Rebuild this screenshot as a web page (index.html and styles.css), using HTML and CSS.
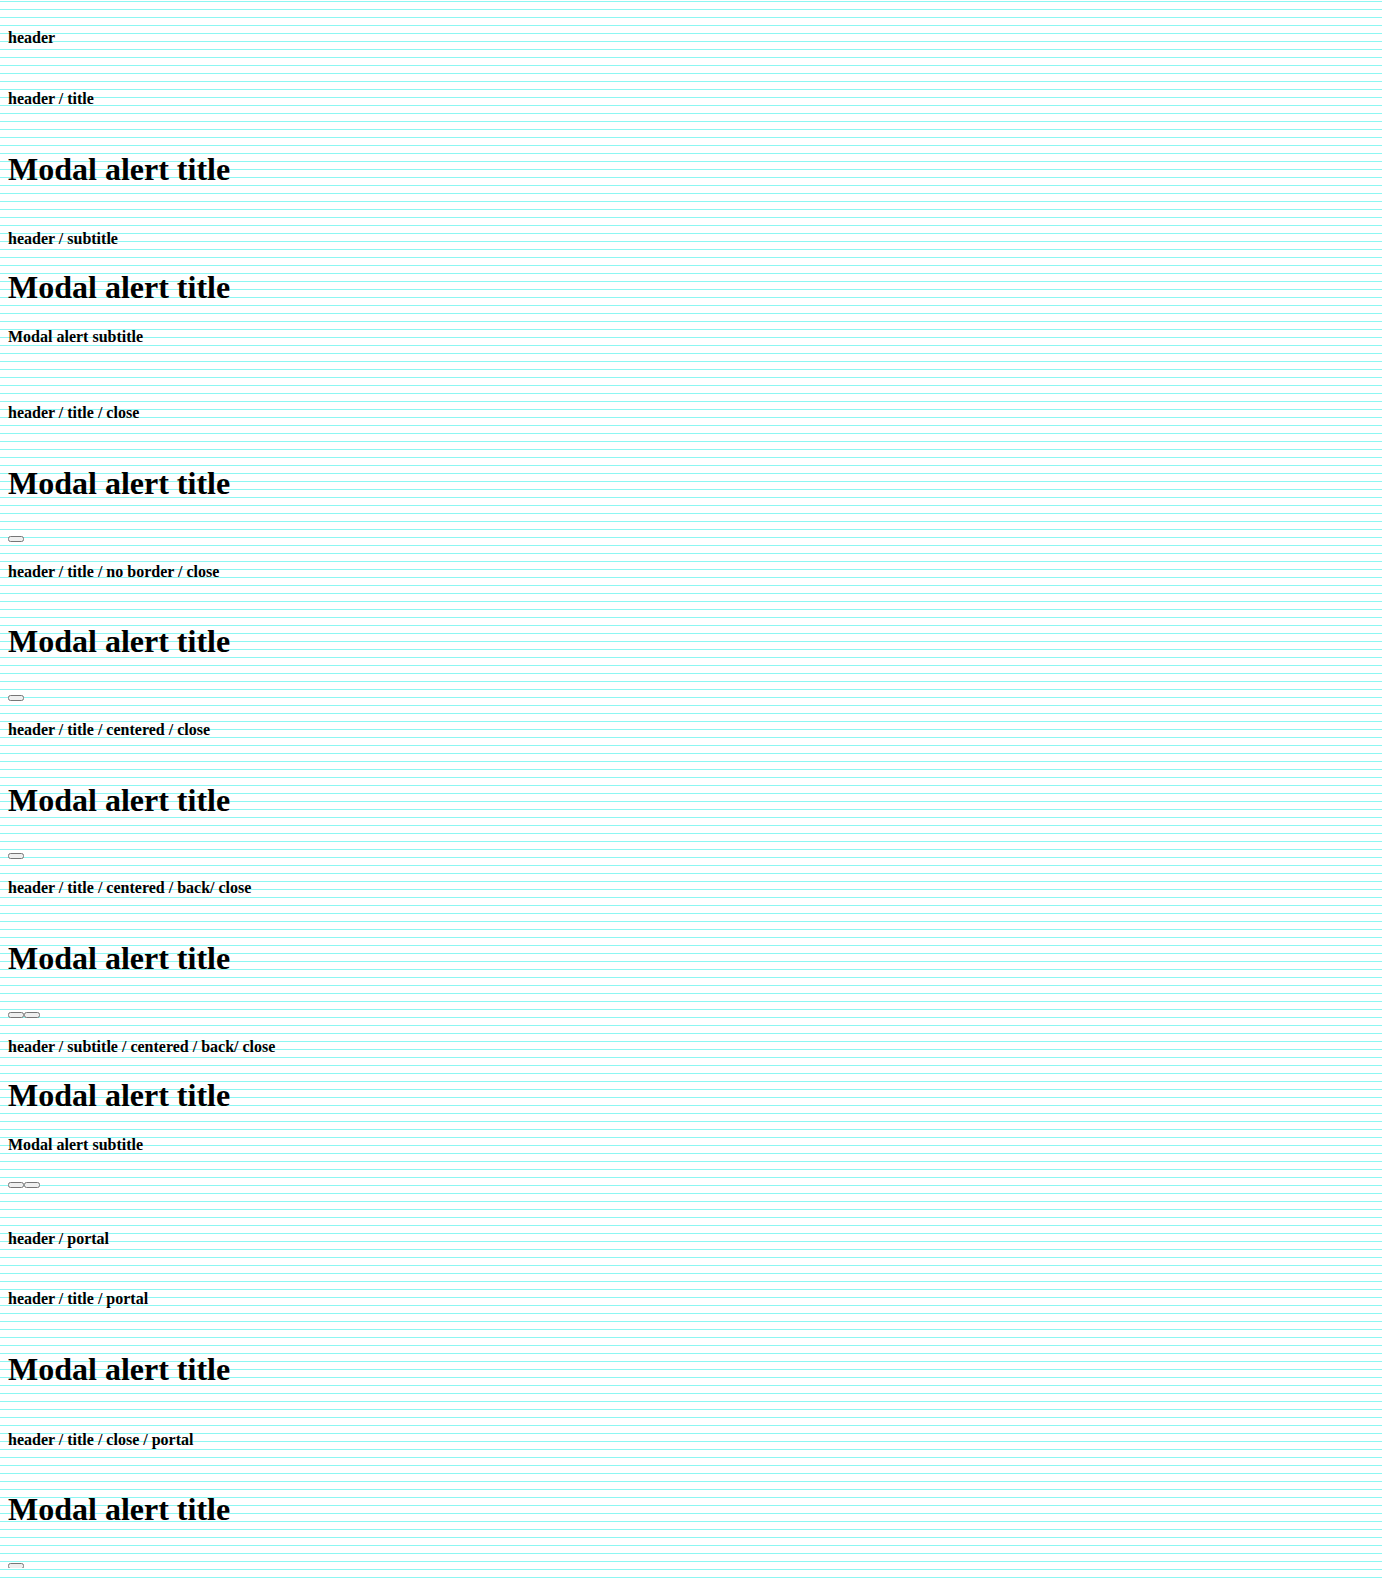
FILE: index.html
```html
<!DOCTYPE html>
<html lang="en">
<head>
<meta charset="utf-8">
<title>Modal header</title>
<link rel="stylesheet" href="styles.css">
</head>
<body>
<h4 class="label">header</h4>
<div class="modal-header"></div>

<h4 class="label">header / title</h4>
<div class="modal-header"><h1 class="title">Modal alert title</h1></div>

<h4 class="label">header / subtitle</h4>
<div class="modal-header modal-header--subtitle"><h1 class="title">Modal alert title</h1><p class="subtitle">Modal alert subtitle</p></div>

<h4 class="label">header / title / close</h4>
<div class="modal-header"><h1 class="title">Modal alert title</h1><div class="actions"><button type="button" aria-label="Close"></button></div></div>

<h4 class="label">header / title / no border / close</h4>
<div class="modal-header"><h1 class="title">Modal alert title</h1><div class="actions"><button type="button" aria-label="Close"></button></div></div>

<h4 class="label">header / title / centered / close</h4>
<div class="modal-header"><h1 class="title">Modal alert title</h1><div class="actions"><button type="button" aria-label="Close"></button></div></div>

<h4 class="label">header / title / centered / back/ close</h4>
<div class="modal-header"><h1 class="title">Modal alert title</h1><div class="actions"><button type="button" aria-label="Back"></button><button type="button" aria-label="Close"></button></div></div>

<h4 class="label">header / subtitle / centered / back/ close</h4>
<div class="modal-header modal-header--subtitle"><h1 class="title">Modal alert title</h1><p class="subtitle">Modal alert subtitle</p><div class="actions"><button type="button" aria-label="Back"></button><button type="button" aria-label="Close"></button></div></div>

<h4 class="label">header / portal</h4>
<div class="modal-header"></div>

<h4 class="label">header / title / portal</h4>
<div class="modal-header"><h1 class="title">Modal alert title</h1></div>

<h4 class="label">header / title / close / portal</h4>
<div class="modal-header"><h1 class="title">Modal alert title</h1><div class="actions"><button type="button" aria-label="Close"></button></div></div>
</body>
</html>
```

FILE: styles.css
```css
html {
  background-color: #ffffff;
  background-image: linear-gradient(#8cf7f2 1px, transparent 1px);
  background-size: 100% 8px;
  background-position: 0 1px;
}

body {
  margin: 8px;
  display: flex;
  flex-direction: column;
  font-family: "Liberation Serif", "Times New Roman", serif;
  font-size: 16px;
  color: #000000;
}

.label {
  margin: 21.28px 0;
  font-size: 16px;
  font-weight: bold;
}

.title {
  margin: 21.44px 0;
  font-size: 32px;
  font-weight: bold;
}

.modal-header--subtitle {
  padding-bottom: 22px;
}

.modal-header--subtitle .title {
  margin-top: 0;
}

.subtitle {
  margin: 0 0 15px;
  font-size: 16px;
  font-weight: bold;
}

.actions {
  display: flex;
  align-items: flex-start;
  box-sizing: border-box;
  height: 18px;
  padding-top: 13px;
}
```
